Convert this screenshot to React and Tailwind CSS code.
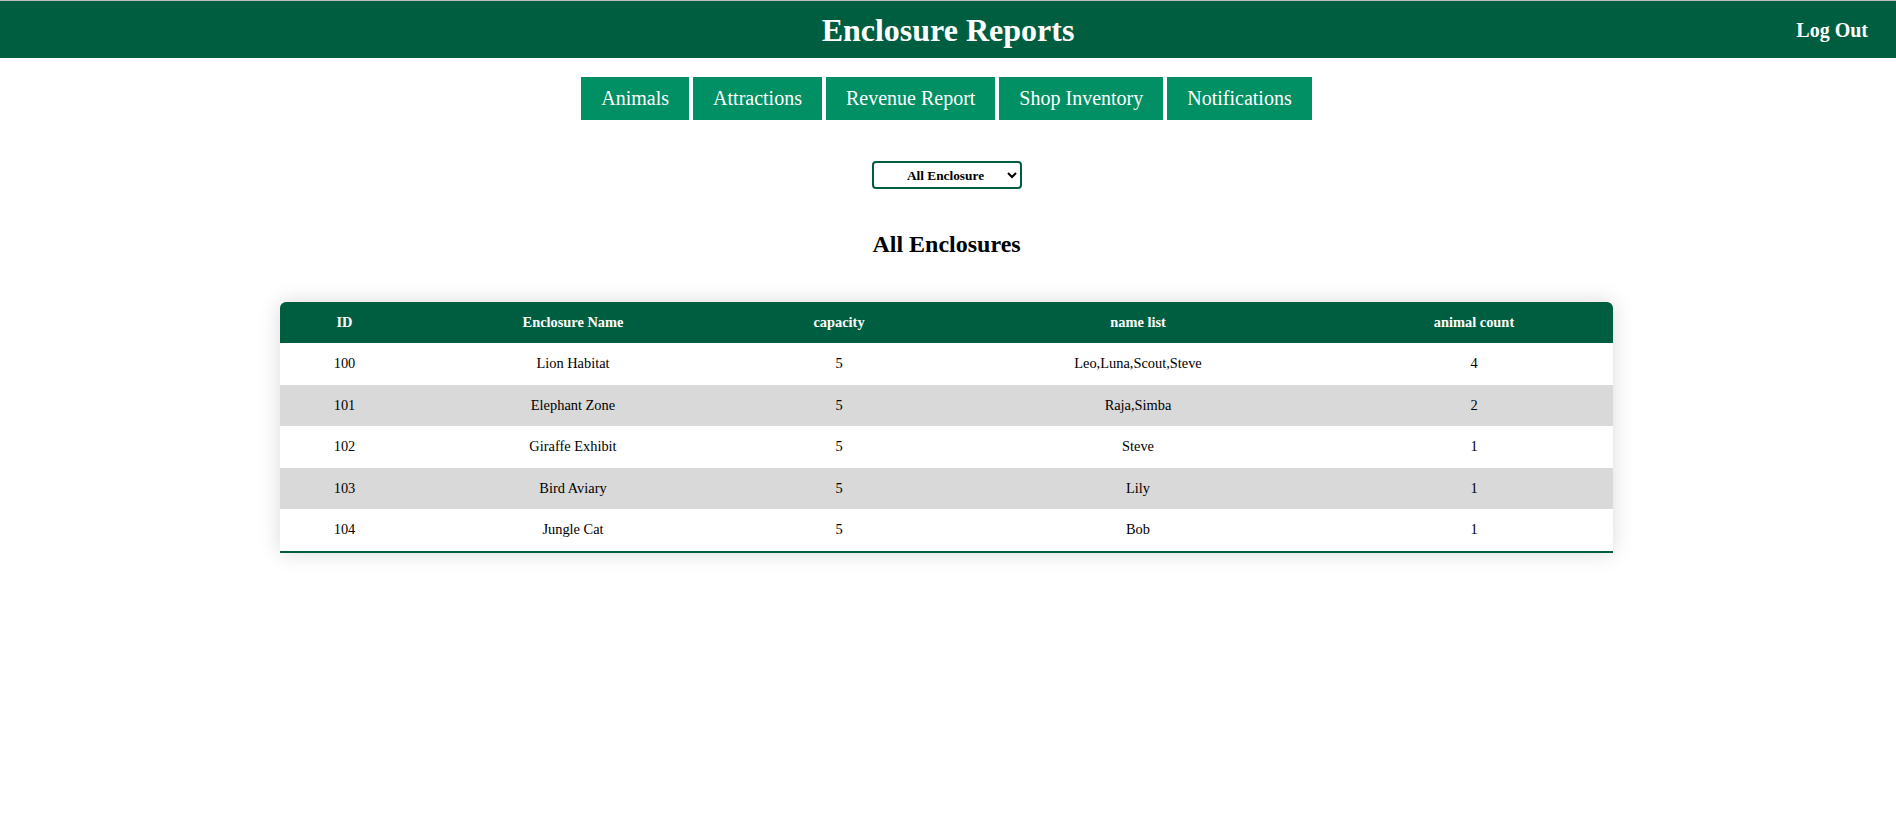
import { useState } from 'react'

const enclosures = [
  { id: 100, name: 'Lion Habitat', capacity: 5, names: 'Leo,Luna,Scout,Steve', count: 4 },
  { id: 101, name: 'Elephant Zone', capacity: 5, names: 'Raja,Simba', count: 2 },
  { id: 102, name: 'Giraffe Exhibit', capacity: 5, names: 'Steve', count: 1 },
  { id: 103, name: 'Bird Aviary', capacity: 5, names: 'Lily', count: 1 },
  { id: 104, name: 'Jungle Cat', capacity: 5, names: 'Bob', count: 1 },
]

const navLinks = ['Animals', 'Attractions', 'Revenue Report', 'Shop Inventory', 'Notifications']

const App = () => {
  const [filter, setFilter] = useState('all')

  return (
    <div className="min-h-[839px] bg-white font-['Liberation_Serif',serif] text-black">
      {/* header bar */}
      <header className="relative flex h-[58px] items-center justify-center border-t border-[#bdbdbd] bg-[#005e40]">
        <h1 className="text-[32px] font-bold text-white">Enclosure Reports</h1>
        <button className="absolute right-[28px] top-[14px] text-[20px] font-bold text-white">Log Out</button>
      </header>

      <nav className="mt-[19px] flex justify-center gap-[4px] pr-[3px]">
        {navLinks.map((link) => (
          <button key={link} className="h-[43px] bg-[#009063] px-[20px] text-[20px] leading-[23px] text-white">
            {link}
          </button>
        ))}
      </nav>

      <div className="mt-[41px] flex justify-center pr-[3px]">
        <select
          value={filter}
          onChange={(e) => setFilter(e.target.value)}
          className="h-[28px] w-[150px] rounded-[4px] border-2 border-[#005e40] bg-white pl-[10px] text-center text-[13.33px] font-bold"
        >
          <option value="all">All Enclosure</option>
          {enclosures.map((enc) => (
            <option key={enc.id} value={enc.id}>{enc.name}</option>
          ))}
        </select>
      </div>

      <h2 className="mt-[41px] pr-[3px] text-center text-[24px] font-bold leading-[28px]">All Enclosures</h2>

      <div className="mt-[44px] flex justify-center pr-[3px]">
        <table className="w-[1333px] table-fixed border-collapse text-center text-[14.4px] shadow-[0_0_20px_rgba(0,0,0,0.15)]">
          <colgroup>
            <col className="w-[129px]" />
            <col className="w-[328px]" />
            <col className="w-[204px]" />
            <col className="w-[394px]" />
            <col className="w-[278px]" />
          </colgroup>
          <thead>
            <tr className="bg-[#005e40] font-bold text-white">
              <th className="rounded-tl-[6px] py-3 leading-[17px]">ID</th>
              <th className="py-3 leading-[17px]">Enclosure Name</th>
              <th className="py-3 leading-[17px]">capacity</th>
              <th className="py-3 leading-[17px]">name list</th>
              <th className="rounded-tr-[6px] py-3 leading-[17px]">animal count</th>
            </tr>
          </thead>
          <tbody>
            {enclosures.map((enc, i) => (
              <tr
                key={enc.id}
                className={`${i % 2 === 1 ? 'bg-[#d9d9d9]' : 'bg-white'} ${i === enclosures.length - 1 ? 'border-b-2 border-[#005e40]' : ''}`}
              >
                <td className="py-3 leading-[17.6px]">{enc.id}</td>
                <td className="py-3 leading-[17.6px]">{enc.name}</td>
                <td className="py-3 leading-[17.6px]">{enc.capacity}</td>
                <td className="py-3 leading-[17.6px]">{enc.names}</td>
                <td className="py-3 leading-[17.6px]">{enc.count}</td>
              </tr>
            ))}
          </tbody>
        </table>
      </div>
    </div>
  )
}

export default App
